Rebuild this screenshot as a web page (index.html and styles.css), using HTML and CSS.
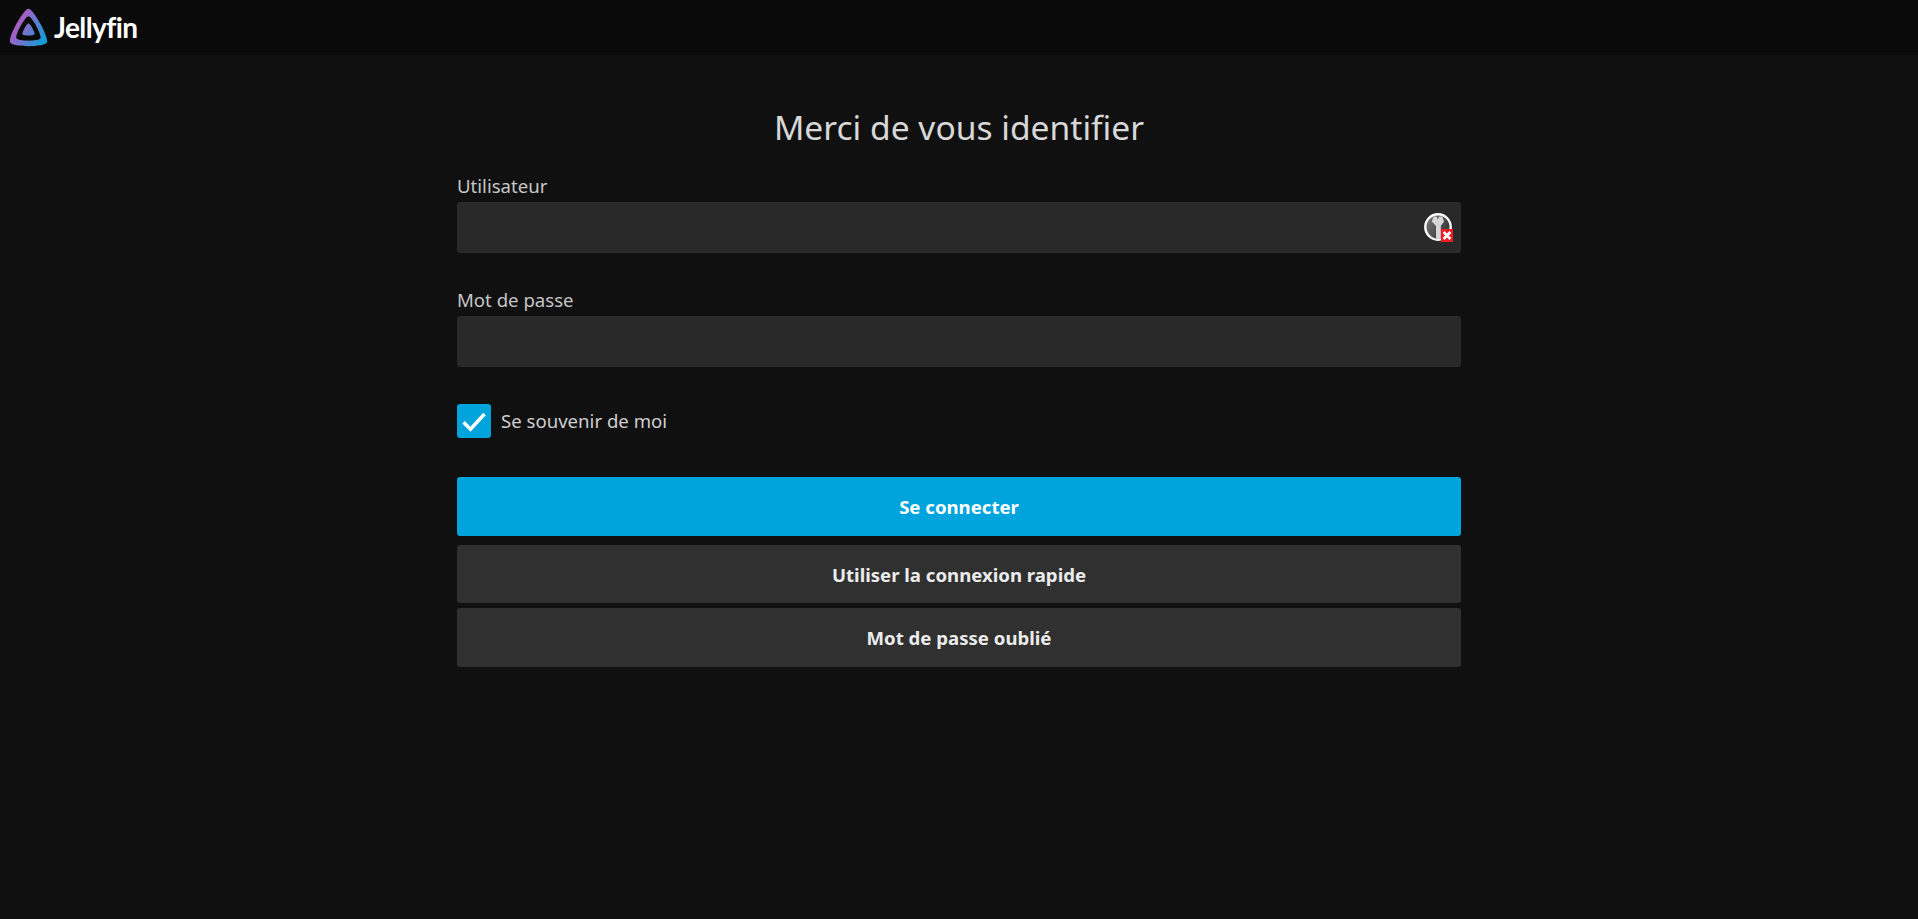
FILE: index.html
```html
<!DOCTYPE html>
<html lang="fr">
<head>
<meta charset="utf-8">
<title>Jellyfin</title>
<link rel="stylesheet" href="styles.css">
</head>
<body>
<header class="top">
  <svg class="logo" viewBox="0 0 512 512" aria-hidden="true">
    <defs>
      <linearGradient id="lg" gradientUnits="userSpaceOnUse" x1="110.25" y1="213.3" x2="496.14" y2="436.09">
        <stop offset="0" stop-color="#aa5cc3"/>
        <stop offset="1" stop-color="#00a4dc"/>
      </linearGradient>
    </defs>
    <path fill="url(#lg)" d="M256 201.6c-20.4 0-86.2 119.3-76.2 139.4s142.5 19.9 152.4 0S276.5 201.6 256 201.6z"/>
    <path fill="url(#lg)" d="M256 23.3c-61.6 0-259.8 359.4-229.6 420.1s429.3 60 459.2 0S317.6 23.3 256 23.3zM406.5 390.8c-19.6 39.3-281.1 39.8-300.9 0s110.1-275.3 150.4-275.3S426.1 351.4 406.5 390.8z"/>
  </svg>
  <span class="brand">Jellyfin</span>
</header>
<main class="login">
  <h1 class="title">Merci de vous identifier</h1>
  <form class="form">
    <div class="field">
      <label class="label" for="u">Utilisateur</label>
      <div class="input-wrap">
        <input class="input" id="u" type="text">
        <svg class="pm" viewBox="0 0 30 30" aria-hidden="true">
          <defs>
            <linearGradient id="pmg" x1="0" y1="0" x2="1" y2="0.6">
              <stop offset="0" stop-color="#7c7c7c"/>
              <stop offset="1" stop-color="#333"/>
            </linearGradient>
          </defs>
          <circle cx="14" cy="14" r="12.7" fill="url(#pmg)" stroke="#fff" stroke-width="2.4"/>
          <path fill="#d6d6d6" d="M9.5 3.5h3.2l1.2 3 1.2-3h3.2l1.7 5-3.2 4.4V25l-2.4 1.4-2.4-1.4V12.9L7.8 8.5z"/>
          <rect x="17" y="16" width="12" height="13" fill="#ed1c24"/>
          <path stroke="#fff" stroke-width="2.6" d="M19.6 19l6.8 7M26.4 19l-6.8 7"/>
        </svg>
      </div>
    </div>
    <div class="field field-pass">
      <label class="label" for="p">Mot de passe</label>
      <input class="input" id="p" type="password">
    </div>
    <label class="check">
      <span class="box">
        <svg class="tick" viewBox="0 0 24 24" aria-hidden="true"><path fill="none" stroke="#fff" stroke-width="3" d="M3 13l6 6L21 6"/></svg>
      </span>
      <span class="check-text">Se souvenir de moi</span>
    </label>
    <button class="btn btn-primary" type="button">Se connecter</button>
    <button class="btn btn-quick" type="button">Utiliser la connexion rapide</button>
    <button class="btn btn-forgot" type="button">Mot de passe oublié</button>
  </form>
</main>
</body>
</html>
```
FILE: styles.css
```css
* { box-sizing: border-box; }
html, body { margin: 0; height: 100%; }
body {
  background: #101010;
  color: #fff;
  font-family: "Noto Sans", sans-serif;
  overflow: hidden;
}
.top {
  height: 55px;
  background: #0a0a0a;
  display: flex;
  align-items: center;
  padding-left: 8px;
}
.logo { width: 41px; height: 41px; display: block; }
.brand {
  margin-left: 5px;
  margin-top: -2px;
  font-family: Lato, sans-serif;
  font-weight: 700;
  font-size: 28px;
  letter-spacing: -0.6px;
  color: #fff;
}
.login { width: 1004px; margin: 0 auto; }
.title {
  margin: 50px 0 0;
  font-size: 33.6px;
  line-height: 44px;
  font-weight: 400;
  text-align: center;
  color: #d8d8d8;
}
.form { display: flex; flex-direction: column; margin-top: 21px; }
.field { display: flex; flex-direction: column; }
.field-pass { margin-top: 31.3px; }
.label { font-size: 18.6px; line-height: 32px; height: 32px; color: #c6c6c6; }
.input-wrap { position: relative; }
.input {
  display: block;
  width: 100%;
  height: 50.7px;
  background: #292929;
  border: 1px solid #2c2c2c;
  border-radius: 3px;
  outline: none;
  color: #fff;
}
.pm { position: absolute; right: 7px; top: 11px; width: 30px; height: 30px; }
.check { display: flex; align-items: center; margin-top: 37.3px; height: 34px; }
.box {
  width: 34px; height: 34px;
  border-radius: 3px;
  background: #00a4dc;
  display: flex; align-items: center; justify-content: center;
}
.tick { width: 28px; height: 28px; }
.check-text { margin-left: 10px; font-size: 18.6px; color: #cfcfcf; }
.btn {
  display: block;
  width: 100%;
  border: 0;
  border-radius: 3px;
  font-family: inherit;
  font-size: 18.6px;
  font-weight: 700;
  color: #ececec;
}
.btn-primary { margin-top: 39.3px; height: 59px; background: #00a4dc; color: #fff; }
.btn-quick { margin-top: 9px; height: 58px; background: #303030; }
.btn-forgot { margin-top: 5px; height: 59px; background: #303030; }
```
